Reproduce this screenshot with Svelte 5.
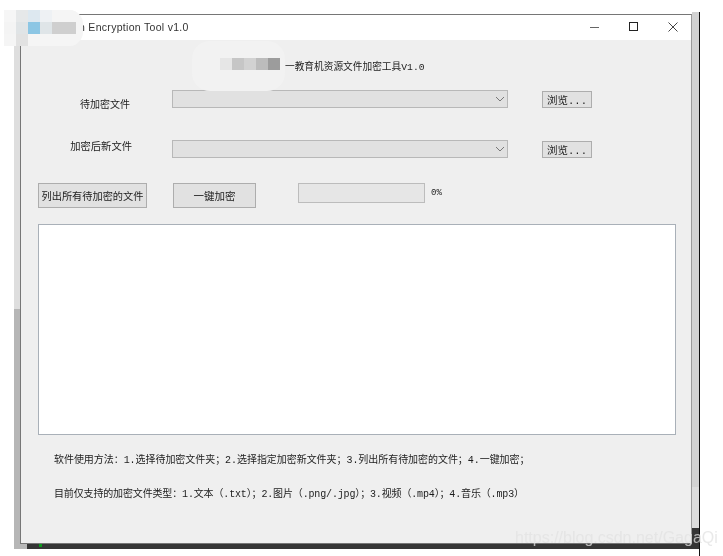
<script>
  // main form of the encryption tool
  const rows = [
    { label: '待加密文件', cls: 'first' },
    { label: '加密后新文件', cls: 'second' },
  ];

  // pixelated blur over the app icon, three rows of 12px cells
  const iconCells = [
    '#f6f6f6', '#e6e8e9', '#dde8f0', '#eef1f4', '#f5f5f5', '#f5f5f5',
    '#f4f4f4', '#e0e4e6', '#8cc6e4', '#dfe5e8', '#cfcfcf', '#cfcfcf',
    '#f5f5f5', '#e2e2e2', '#f5f5f5', '#f5f5f5', '#f5f5f5', '#f5f5f5',
  ];
  const titleCells = ['#e6e6e6', '#c6c6c6', '#d2d2d2', '#bcbcbc', '#9c9c9c'];
</script>

<div class="page">
  <div class="frame">
    <div class="window">
      <header class="titlebar">
        <span class="app-name">n Encryption Tool v1.0</span>
        <div class="win-btns">
          <svg width="12" height="12" viewBox="0 0 12 12"><path d="M1 6.5h9" stroke="#666" fill="none"/></svg>
          <svg width="12" height="12" viewBox="0 0 12 12"><rect x="1.5" y="1.5" width="8" height="8" stroke="#222" fill="none"/></svg>
          <svg width="12" height="12" viewBox="0 0 12 12"><path d="M1.5 1.5l9 9M10.5 1.5l-9 9" stroke="#444" fill="none"/></svg>
        </div>
      </header>

      <main class="body">
        <div class="heading">一教育机资源文件加密工具V1.0</div>

        {#each rows as row}
          <div class="file-row {row.cls}">
            <span class="label">{row.label}</span>
            <div class="combo">
              <svg width="10" height="6" viewBox="0 0 10 6"><path d="M1 1l4 4 4-4" stroke="#777" fill="none"/></svg>
            </div>
            <button class="browse">浏览...</button>
          </div>
        {/each}

        <div class="actions">
          <button class="list-btn">列出所有待加密的文件</button>
          <button class="encrypt-btn">一键加密</button>
          <div class="progress"></div>
          <span class="percent">0%</span>
        </div>

        <div class="log"></div>

        <p class="hint">软件使用方法：1.选择待加密文件夹；2.选择指定加密新文件夹；3.列出所有待加密的文件；4.一键加密；</p>
        <p class="hint second-hint">目前仅支持的加密文件类型：1.文本（.txt）；2.图片（.png/.jpg）；3.视频（.mp4）；4.音乐（.mp3）</p>
      </main>
    </div>
    <div class="taskbar"><i class="led"></i></div>
  </div>

  <!-- blurred-out parts of the screenshot -->
  <div class="icon-smudge">
    {#each iconCells as c}
      <i style="background: {c}"></i>
    {/each}
  </div>
  <div class="title-smudge">
    {#each titleCells as c}
      <i style="background: {c}"></i>
    {/each}
  </div>
  <span class="watermark">https://blog.csdn.net/GagaQi</span>
</div>

<style>
  :global(body) {
    margin: 0;
    background: #fff;
  }

  .page {
    position: relative;
    width: 723px;
    height: 556px;
    overflow: hidden;
    background: #fff;
    font-family: "Liberation Mono", "Noto Sans CJK SC", monospace;
    color: #1c1c1c;
    filter: blur(0.3px);
  }

  .frame {
    box-sizing: border-box;
    width: 686px;
    height: 544px;
    margin: 12px 0 0 14px;
    padding: 2px 7px 0 6px;
    border-right: 1px solid #111;
    background:
      linear-gradient(#dedede 297px, #b6b6b6 297px) 0 0 / 6px 537px no-repeat,
      linear-gradient(#b8b8b8, #b8b8b8) 0 532px / 13px 5px no-repeat,
      linear-gradient(#d2d2d2 475px, #dcdcdc 475px, #dcdcdc 516px, #353535 516px) 100% 0 / 7px 537px no-repeat;
  }

  .window {
    box-sizing: border-box;
    height: 530px;
    border: 1px solid #767676;
    border-right-color: #9a9a9a;
    background: #efefef;
    display: flex;
    flex-direction: column;
  }

  .taskbar {
    height: 5px;
    margin: 0 -7px 0 7px;
    padding-left: 12px;
    background: #353535;
  }

  .led {
    display: block;
    width: 3px;
    height: 3px;
    background: #0a9a1a;
  }

  .titlebar {
    box-sizing: border-box;
    height: 25px;
    flex: none;
    padding-bottom: 2px;
    background: #fff;
    display: flex;
    align-items: center;
    justify-content: space-between;
    font-family: "Liberation Sans", "Noto Sans CJK SC", sans-serif;
    font-size: 10.5px;
    color: #333;
  }

  .app-name {
    margin-left: 58px;
    letter-spacing: 0.3px;
  }

  .win-btns {
    display: flex;
    gap: 27px;
    margin-right: 12px;
  }

  .body {
    flex: 1;
    padding: 21px 15px 0 17px;
    font-size: 9.7px;
  }

  .heading {
    height: 14px;
    line-height: 14px;
    margin-left: 247px;
    white-space: nowrap;
  }

  .file-row {
    display: flex;
    align-items: center;
    height: 18px;
  }

  .first { margin-top: 15px; }
  .second { margin-top: 32px; }

  .label {
    width: 134px;
    padding-right: 42px;
    box-sizing: border-box;
    text-align: right;
    font-size: 10px;
    position: relative;
    top: 4px;
    white-space: nowrap;
  }

  .second .label {
    top: -4px;
    padding-right: 40px;
    font-size: 10.3px;
  }

  .combo {
    box-sizing: border-box;
    width: 336px;
    height: 18px;
    background: #e1e1e1;
    border: 1px solid #b8b8b8;
    display: flex;
    align-items: center;
    justify-content: flex-end;
    padding-right: 2px;
  }

  button {
    font: inherit;
    color: inherit;
    padding: 0;
    box-sizing: border-box;
    background: #e1e1e1;
    border: 1px solid #adadad;
  }

  .browse {
    width: 50px;
    height: 17px;
    margin-left: 34px;
    font-size: 10.5px;
  }

  .actions {
    display: flex;
    align-items: flex-start;
    margin-top: 25px;
  }

  .list-btn {
    width: 109px;
    height: 25px;
    font-size: 10.2px;
    white-space: nowrap;
  }

  .encrypt-btn {
    width: 83px;
    height: 25px;
    margin-left: 26px;
    font-size: 10.5px;
  }

  .progress {
    box-sizing: border-box;
    width: 127px;
    height: 20px;
    margin-left: 42px;
    background: #e6e6e6;
    border: 1px solid #bcbcbc;
  }

  .percent {
    margin-left: 6px;
    line-height: 20px;
    font-size: 9px;
  }

  .log {
    box-sizing: border-box;
    width: 638px;
    height: 211px;
    margin-top: 16px;
    background: #fff;
    border: 1px solid #a9b0b8;
  }

  .hint {
    margin: 19px 0 0 16px;
    font-size: 10px;
    letter-spacing: -0.05px;
    line-height: 14px;
    white-space: nowrap;
  }

  .second-hint {
    margin-top: 20px;
    letter-spacing: -0.15px;
  }

  .icon-smudge {
    position: absolute;
    left: 4px;
    top: 10px;
    display: grid;
    grid-template-columns: repeat(6, 12px) 7px;
    grid-template-rows: repeat(3, 12px);
    overflow: hidden;
    border-radius: 0 14px 14px 0;
    background: #f5f5f5;
  }

  .icon-smudge i:nth-child(n + 7):nth-child(-n + 12) {
    grid-row: 2;
  }

  .icon-smudge i:nth-child(n + 13) {
    grid-row: 3;
  }

  .title-smudge {
    position: absolute;
    left: 192px;
    top: 41px;
    box-sizing: border-box;
    width: 93px;
    height: 50px;
    padding: 17px 0 0 28px;
    display: flex;
    align-items: flex-start;
    background: #f2f2f2;
    border-radius: 18px;
  }

  .title-smudge i {
    display: block;
    flex: none;
    width: 12px;
    height: 12px;
  }

  .watermark {
    position: absolute;
    left: 515px;
    top: 529px;
    font-family: "Liberation Sans", sans-serif;
    font-size: 16px;
    color: rgba(225, 225, 225, 0.75);
    white-space: nowrap;
  }
</style>
